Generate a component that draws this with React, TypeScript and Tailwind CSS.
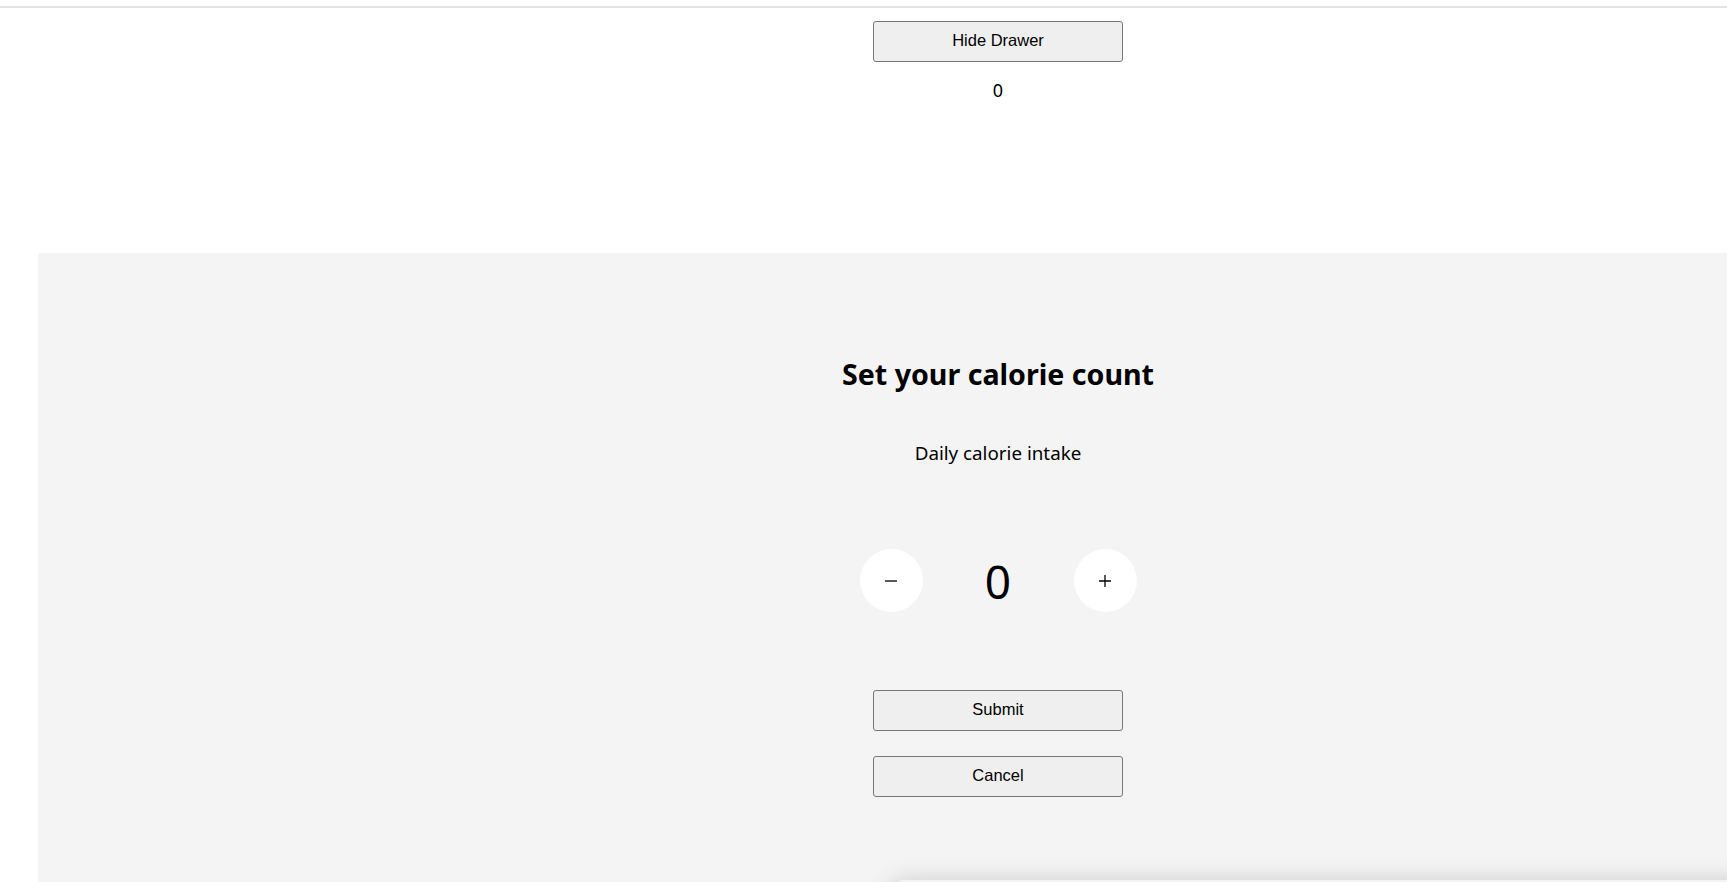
import { useState } from "react";

const uiFont = { fontFamily: '"Noto Sans", "Open Sans", sans-serif' };

function NativeButton({ label, onClick, className = "" }: { label: string; onClick?: () => void; className?: string }) {
  return (
    <button
      type="button"
      onClick={onClick}
      className={`w-[250px] rounded-[3px] border border-[#767676] bg-[#efefef] pb-[3px] text-[16.5px] text-black font-['Liberation_Sans',Arial,sans-serif] ${className}`}
    >
      {label}
    </button>
  );
}

export default function App() {
  const [count, setCount] = useState(0);
  const [calories, setCalories] = useState(0);

  return (
    <div className="relative h-screen overflow-hidden bg-white">
      <div className="h-[6px]" />
      <div className="h-[2px] bg-[#e4e4e4]" />

      <div className="w-[1996px] flex flex-col items-center">
        <NativeButton label="Hide Drawer" className="mt-[13px] h-[41px]" />
        <p className="mt-[16px] h-[24px] leading-[24px] text-[18px] text-black" style={uiFont}>
          {count}
        </p>
      </div>

      <div className="ml-[38px] mt-[151px] w-[1920px] h-[700px] bg-[#f4f4f4] flex flex-col items-center" style={uiFont}>
        <h2 className="mt-[101px] h-[40px] leading-[40px] text-[28.6px] font-bold text-black">Set your calorie count</h2>
        <p className="mt-[47px] h-[24px] leading-[24px] text-[18.8px] text-black">Daily calorie intake</p>

        <div className="mt-[84px] flex items-center">
          <button
            type="button"
            onClick={() => setCalories((c) => Math.max(0, c - 1))}
            className="w-[63px] h-[63px] rounded-full bg-white flex items-center justify-center text-black"
          >
            <svg width="14" height="14" viewBox="0 0 14 14">
              <path d="M1 7h12" stroke="black" strokeWidth="1.3" />
            </svg>
          </button>
          <div className="w-[151px] text-center text-[46px] leading-[62px] text-black">{calories}</div>
          <button
            type="button"
            onClick={() => setCalories((c) => c + 1)}
            className="w-[63px] h-[63px] rounded-full bg-white flex items-center justify-center text-black"
          >
            <svg width="14" height="14" viewBox="0 0 14 14">
              <path d="M1 7h12M7 1v12" stroke="black" strokeWidth="1.3" />
            </svg>
          </button>
        </div>

        <NativeButton label="Submit" className="mt-[78px] h-[41px]" onClick={() => setCount((c) => c + 1)} />
        <NativeButton label="Cancel" className="mt-[25px] h-[41px]" />
      </div>

      <div className="absolute left-[889px] top-[880px] w-[1200px] h-[300px] bg-[#f4f4f4] rounded-t-[16px] shadow-[0_0_24px_rgba(0,0,0,0.16)]" />
    </div>
  );
}
